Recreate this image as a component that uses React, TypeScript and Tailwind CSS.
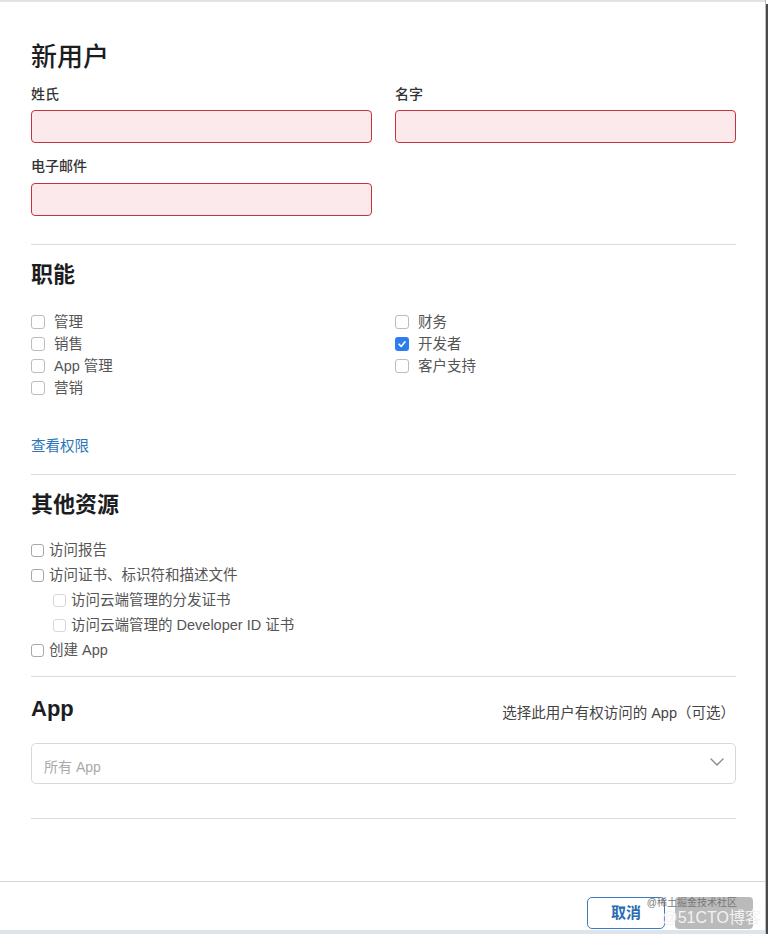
import React from "react";

const font = { fontFamily: '"Liberation Sans", "Noto Sans CJK SC", sans-serif' };

function RoleBox({ checked }: { checked?: boolean }) {
  if (checked) {
    return (
      <span className="flex h-[14px] w-[14px] items-center justify-center rounded-[3px] bg-[#2f7cf0]">
        <svg width="10" height="10" viewBox="0 0 10 10" fill="none">
          <path d="M2 5.2 L4.2 7.4 L8 2.8" stroke="white" strokeWidth="1.6" strokeLinecap="round" strokeLinejoin="round" />
        </svg>
      </span>
    );
  }
  return <span className="h-[14px] w-[14px] rounded-[3px] border border-[#bdbdbd] bg-white" />;
}

function Role({ label, checked }: { label: string; checked?: boolean }) {
  return (
    <div className="flex h-[22px] items-center gap-[9px]">
      <RoleBox checked={checked} />
      <span className="text-[14.5px] leading-[22px] text-[#555]">{label}</span>
    </div>
  );
}

function Res({ label, sub }: { label: string; sub?: boolean }) {
  return (
    <div className={`flex h-[25px] items-center gap-[5px] ${sub ? "pl-[22px]" : ""}`}>
      <span
        className={`h-[13px] w-[13px] rounded-[3px] border bg-white ${sub ? "border-[#d8d8d8]" : "border-[#a8a8a8]"}`}
      />
      <span className="text-[14.5px] leading-[25px] text-[#555]">{label}</span>
    </div>
  );
}

export default function App() {
  return (
    <div className="relative flex h-[934px] w-[768px] overflow-hidden bg-white" style={font}>
      <div className="flex w-[765px] flex-col">
        <div className="h-[2px] bg-[#e2e2e2]" />
        <div className="flex flex-col pl-[31px] pr-[29px]">
          <h1 className="mt-[39px] text-[26px] font-medium leading-[32px] text-[#1d1d1f]">新用户</h1>
          <div className="mt-[11px] grid grid-cols-2 gap-x-[23px]">
            <div className="flex flex-col">
              <label className="text-[14px] font-medium leading-[20px] text-[#333]">姓氏</label>
              <div className="mt-[6px] h-[33px] rounded-[4px] border border-[#c4343c] bg-[#fbe9eb]" />
            </div>
            <div className="flex flex-col">
              <label className="text-[14px] font-medium leading-[20px] text-[#333]">名字</label>
              <div className="mt-[6px] h-[33px] rounded-[4px] border border-[#c4343c] bg-[#fbe9eb]" />
            </div>
            <div className="mt-[13px] flex flex-col">
              <label className="text-[14px] font-medium leading-[20px] text-[#333]">电子邮件</label>
              <div className="mt-[7px] h-[33px] rounded-[4px] border border-[#c4343c] bg-[#fbe9eb]" />
            </div>
          </div>

          <div className="mt-[28px] h-px bg-[#dcdcdc]" />
          <h2 className="mt-[15px] text-[22px] font-bold leading-[30px] text-[#1d1d1f]">职能</h2>
          <div className="mt-[21px] grid grid-cols-2 gap-x-[23px]">
            <div className="flex flex-col">
              <Role label="管理" />
              <Role label="销售" />
              <Role label="App 管理" />
              <Role label="营销" />
            </div>
            <div className="flex flex-col">
              <Role label="财务" />
              <Role label="开发者" checked />
              <Role label="客户支持" />
            </div>
          </div>
          <a className="mt-[37px] text-[14.5px] leading-[20px] text-[#2a76b9]">查看权限</a>

          <div className="mt-[18px] h-px bg-[#dcdcdc]" />
          <h2 className="mt-[15px] text-[22px] font-bold leading-[30px] text-[#1d1d1f]">其他资源</h2>
          <div className="mt-[18px] flex flex-col">
            <Res label="访问报告" />
            <Res label="访问证书、标识符和描述文件" />
            <Res label="访问云端管理的分发证书" sub />
            <Res label="访问云端管理的 Developer ID 证书" sub />
            <Res label="创建 App" />
          </div>

          <div className="mt-[13px] h-px bg-[#dcdcdc]" />
          <div className="mt-[17px] flex items-center justify-between pr-[1px]">
            <h2 className="text-[22px] font-bold leading-[30px] text-[#1d1d1f]">App</h2>
            <span className="mt-[8px] text-[14.5px] leading-[20px] text-[#444]">选择此用户有权访问的 App（可选）</span>
          </div>
          <div className="mt-[19px] flex h-[41px] items-center justify-between rounded-[5px] border border-[#d8d8d8] pl-[12px] pr-[11px]">
            <span className="mt-[8px] text-[14px] text-[#a9a9a9]">所有 App</span>
            <svg width="14" height="8" viewBox="0 0 14 8" fill="none" className="mb-[3px]">
              <path d="M1 1 L7 7 L13 1" stroke="#8a8a8a" strokeWidth="1.4" strokeLinecap="round" strokeLinejoin="round" />
            </svg>
          </div>
          <div className="mt-[34px] h-px bg-[#dcdcdc]" />
        </div>

        <div className="mt-auto flex flex-col">
          <div className="h-px bg-[#d6d6d6]" />
          <div className="flex pb-[1px] pl-[587px] pt-[15px]">
            <button className="h-[32px] w-[78px] rounded-[5px] border-[1.5px] border-[#3a7bc4] text-[15px] font-semibold text-[#2a6cb3]">
              取消
            </button>
          </div>
          <div className="h-[4px] bg-[#dde5ea]" />
        </div>
      </div>
      <div className="w-px bg-[#bdbdbd]" />
      <div className="mt-[4px] w-[2px] bg-[#4a4a4a]" />

      <div className="absolute left-[675px] top-[897px] h-[32px] w-[78px] rounded-[4px] bg-[#a9a9a9]/80" />
      <div className="absolute left-[655px] top-[897px] flex w-[106px] flex-col items-end">
        <span className="whitespace-nowrap pr-[24px] text-[10px] leading-[12px] text-[#777]">@稀土掘金技术社区</span>
        <span className="whitespace-nowrap text-[16px] leading-[18px] text-[#f2f2f2]">@51CTO博客</span>
      </div>
    </div>
  );
}
